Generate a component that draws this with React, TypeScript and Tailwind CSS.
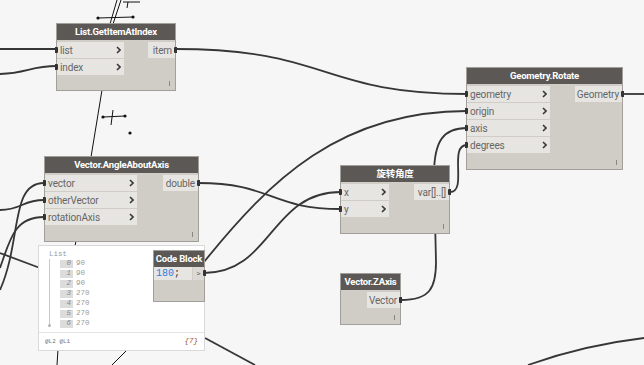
import React from "react";

const Chevron = () => (
  <svg width="5" height="8" viewBox="0 0 5 8" className="shrink-0">
    <path d="M1 1 L4 4 L1 7" fill="none" stroke="#3a3a3a" strokeWidth="1.6" />
  </svg>
);

type NodeProps = {
  className: string;
  title: string;
  inputs: string[];
  outputs: string[];
  portW: string;
  outW: string;
};

function DynNode({ className, title, inputs, outputs, portW, outW }: NodeProps) {
  return (
    <div
      className={`absolute flex flex-col border border-[#a29e99] bg-[#d0ccc6] ${className}`}
    >
      <div className="flex h-[16px] shrink-0 items-center justify-center bg-[#5b5855] text-[9.5px] font-bold tracking-[-0.2px] text-white">
        {title}
      </div>
      <div className="mt-[2px] flex justify-between">
        <div className={`flex flex-col gap-[1px] ${portW}`}>
          {inputs.map((p) => (
            <div
              key={p}
              className="relative flex h-[16px] items-center justify-between bg-[#e7e5e1] pl-[3px] pr-[3px] text-[10px] tracking-[-0.15px] text-[#666]"
            >
              <span className="absolute -left-[2px] top-[5px] h-[6px] w-[3px] rounded-r-[1px] bg-[#333]" />
              <span>{p}</span>
              <Chevron />
            </div>
          ))}
        </div>
        <div className="flex flex-col">
          {outputs.map((p) => (
            <div
              key={p}
              className={`relative flex h-[16px] items-center justify-end bg-[#e7e5e1] pr-[3px] text-[10px] tracking-[-0.15px] text-[#666] ${outW}`}
            >
              <span>{p}</span>
              <span className="absolute -right-[2px] top-[5px] h-[6px] w-[3px] rounded-l-[1px] bg-[#333]" />
            </div>
          ))}
        </div>
      </div>
      <span className="absolute bottom-[4px] right-[5px] h-[5px] w-[1px] bg-[#8a8782]" />
    </div>
  );
}

const wires = [
  "M0 49 L57 49",
  "M0 74 C28 73 30 66 57 66",
  "M175 49 C330 49 320 94 467 94",
  "M204 262 C270 180 340 111 467 111",
  "M204 273 C272 273 270 192 341 192",
  "M198 183 C272 183 270 209 341 209",
  "M450 192 C468 192 448 145 467 145",
  "M401 300 C430 300 436 288 436 262 L434 175 C434 140 444 128 467 128",
  "M622 94 L644 94",
  "M44 183 C10 183 22 240 0 290",
  "M0 210 C22 210 22 200 44 200",
  "M44 217 C14 217 10 240 0 268",
  "M0 253 L40 268",
  "M528 365 C570 350 610 342 644 338",
  "M205 338 L255 365",
];

const geo = [
  "M117 0 L110 24",
  "M121 0 L113 24",
  "M98 18 L133 17",
  "M123 2 L140 2",
  "M128 2 L127 8",
  "M102 90 L91 157",
  "M103 117 L125 116",
  "M113 110 L111 125",
  "M76 241 L75 246",
  "M58 349 L57 365",
  "M128 349 L112 365",
];

const dots: [number, number][] = [
  [98, 18],
  [133, 17],
  [103, 117],
  [125, 116],
  [130, 133],
];

const watch = ["90", "90", "90", "270", "270", "270", "270"];

export default function App() {
  return (
    <div className="relative h-[365px] w-[644px] overflow-hidden bg-[#f6f6f6] font-[Roboto,'Noto_Sans_CJK_SC',sans-serif]">
      <svg className="absolute inset-0" width="644" height="365">
        {wires.map((d) => (
          <path key={d} d={d} fill="none" stroke="#363636" strokeWidth="1.8" />
        ))}
        {geo.map((d) => (
          <path key={d} d={d} fill="none" stroke="#111" strokeWidth="1" />
        ))}
        {dots.map(([x, y]) => (
          <circle key={`${x}-${y}`} cx={x} cy={y} r="1.6" fill="#111" />
        ))}
      </svg>

      <DynNode
        className="left-[56px] top-[23px] h-[68px] w-[120px]"
        title="List.GetItemAtIndex"
        inputs={["list", "index"]}
        outputs={["item"]}
        portW="w-[67px]"
        outW="w-[27px]"
      />

      <DynNode
        className="left-[466px] top-[67px] h-[103px] w-[157px]"
        title="Geometry.Rotate"
        inputs={["geometry", "origin", "axis", "degrees"]}
        outputs={["Geometry"]}
        portW="w-[83px]"
        outW="w-[47px]"
      />

      <DynNode
        className="left-[44px] top-[156px] h-[86px] w-[155px]"
        title="Vector.AngleAboutAxis"
        inputs={["vector", "otherVector", "rotationAxis"]}
        outputs={["double"]}
        portW="w-[92px]"
        outW="w-[35px]"
      />

      <DynNode
        className="left-[340px] top-[165px] h-[69px] w-[110px]"
        title="旋转角度"
        inputs={["x", "y"]}
        outputs={["var[]..[]"]}
        portW="w-[48px]"
        outW="w-[35px]"
      />

      <DynNode
        className="left-[340px] top-[273px] h-[52px] w-[61px]"
        title="Vector.ZAxis"
        inputs={[]}
        outputs={["Vector"]}
        portW="w-0"
        outW="w-[33px]"
      />

      {/* watch preview */}
      <div className="absolute left-[38px] top-[245px] flex h-[106px] w-[167px] flex-col border border-[#d9d9d9] bg-white font-['Liberation_Mono',monospace] text-[7.5px] text-[#9a9a9a]">
        <div className="flex-1 pl-[10px] pt-[3px]">
          <div className="h-[10px] leading-[10px]">List</div>
          <div className="flex">
            <div className="relative w-[11px]">
              <span className="absolute left-0 top-0 h-[66px] w-[1px] bg-[#c8c8c8]" />
              <span className="absolute -left-[1px] top-[65px] h-[3px] w-[3px] rounded-full bg-[#b5b5b5]" />
            </div>
            <div className="flex flex-col">
              {watch.map((v, i) => (
                <div key={i} className="flex h-[10px] items-center gap-[3px]">
                  <span className="flex h-[8px] w-[13px] items-center justify-end bg-[#dcdcdc] pr-[2px] italic leading-none text-[#8a8a8a]">
                    {i}
                  </span>
                  <span className="leading-none">{v}</span>
                </div>
              ))}
            </div>
          </div>
        </div>
        <div className="flex h-[18px] items-center justify-between border-t border-[#e4e4e4] px-[6px] text-[6px]">
          <span className="text-[#777]">@L2 @L1</span>
          <span className="text-[7.5px] italic text-[#a0522d]">{"{7}"}</span>
        </div>
      </div>

      {/* code block */}
      <div className="absolute left-[153px] top-[250px] flex h-[52px] w-[52px] flex-col border border-[#a29e99] bg-[#d0ccc6]">
        <div className="flex h-[16px] items-center justify-center bg-[#5b5855] text-[9.5px] font-bold tracking-[-0.2px] text-white">
          Code Block
        </div>
        <div className="flex h-[13px] items-center justify-between">
          <span className="flex h-full flex-1 items-center bg-[#e7e5e1] pl-[2px] font-['Liberation_Mono',monospace] text-[10px] text-[#2f7de1]">
            180<span className="text-[#333]">;</span>
          </span>
          <span className="relative ml-[1px] flex h-full w-[11px] items-center justify-center bg-[#dcd9d4] text-[8px] text-[#666]">
            &gt;
            <span className="absolute -right-[2px] top-[3px] h-[6px] w-[3px] rounded-l-[1px] bg-[#333]" />
          </span>
        </div>
      </div>
    </div>
  );
}
